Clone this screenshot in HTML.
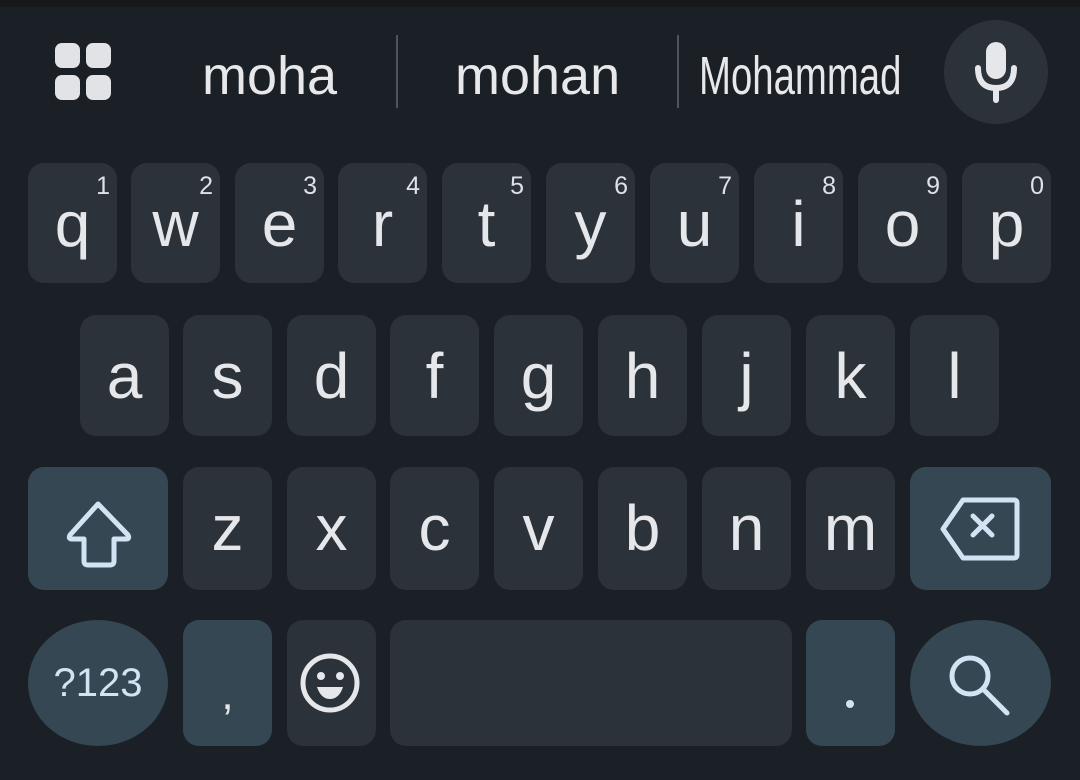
<!DOCTYPE html>
<html><head><meta charset="utf-8"><style>
*{margin:0;padding:0;box-sizing:border-box}
body{width:1080px;height:780px;background:#1b1f26;position:relative;overflow:hidden;font-family:"Liberation Sans",sans-serif;color:#e6e7ea}
.top{position:absolute;left:0;top:0;width:1080px;height:7px;background:#171819}
.k{position:absolute;background:#2c3239;border-radius:16px;text-align:center;font-size:64px;line-height:122px}
.s{background:#344753}
.d{position:absolute;right:7px;top:8px;font-size:25px;line-height:30px;color:#dfe1e4}
.sug{position:absolute;font-size:54px;line-height:1;color:#e8e8ea}
.div{position:absolute;width:2px;height:73px;top:35px;background:#50555b}
.g{position:absolute;width:25px;height:25px;border-radius:7px;background:#e2e3e6}
</style></head><body>
<div class="top"></div>
<div class="g" style="left:55px;top:43px"></div><div class="g" style="left:86px;top:43px"></div>
<div class="g" style="left:55px;top:75px"></div><div class="g" style="left:86px;top:75px"></div>
<div class="sug" style="left:202px;top:49px">moha</div>
<div class="div" style="left:396px"></div>
<div class="sug" style="left:455px;top:49px">mohan</div>
<div class="div" style="left:677px"></div>
<div class="sug" style="left:699px;top:49px;transform:scaleX(0.71);transform-origin:0 0">Mohammad</div>
<div style="position:absolute;left:944px;top:20px;width:104px;height:104px;border-radius:50%;background:#2c3239"></div>
<svg style="position:absolute;left:944px;top:20px" width="104" height="104" viewBox="0 0 104 104">
<rect x="42" y="22" width="20" height="37" rx="10" fill="#e6e7ea"/>
<path d="M34 48 Q34 68 52 68 Q70 68 70 48" fill="none" stroke="#e6e7ea" stroke-width="6" stroke-linecap="round"/>
<line x1="52" y1="68" x2="52" y2="80" stroke="#e6e7ea" stroke-width="6" stroke-linecap="round"/>
</svg>

<div class="k" style="left:28px;top:163px;width:89px;height:120px">q<span class="d">1</span></div>
<div class="k" style="left:131px;top:163px;width:89px;height:120px">w<span class="d">2</span></div>
<div class="k" style="left:235px;top:163px;width:89px;height:120px">e<span class="d">3</span></div>
<div class="k" style="left:338px;top:163px;width:89px;height:120px">r<span class="d">4</span></div>
<div class="k" style="left:442px;top:163px;width:89px;height:120px">t<span class="d">5</span></div>
<div class="k" style="left:546px;top:163px;width:89px;height:120px">y<span class="d">6</span></div>
<div class="k" style="left:650px;top:163px;width:89px;height:120px">u<span class="d">7</span></div>
<div class="k" style="left:754px;top:163px;width:89px;height:120px">i<span class="d">8</span></div>
<div class="k" style="left:858px;top:163px;width:89px;height:120px">o<span class="d">9</span></div>
<div class="k" style="left:962px;top:163px;width:89px;height:120px">p<span class="d">0</span></div>

<div class="k" style="left:80px;top:315px;width:89px;height:121px">a</div>
<div class="k" style="left:183px;top:315px;width:89px;height:121px">s</div>
<div class="k" style="left:287px;top:315px;width:89px;height:121px">d</div>
<div class="k" style="left:390px;top:315px;width:89px;height:121px">f</div>
<div class="k" style="left:494px;top:315px;width:89px;height:121px">g</div>
<div class="k" style="left:598px;top:315px;width:89px;height:121px">h</div>
<div class="k" style="left:702px;top:315px;width:89px;height:121px">j</div>
<div class="k" style="left:806px;top:315px;width:89px;height:121px">k</div>
<div class="k" style="left:910px;top:315px;width:89px;height:121px">l</div>

<div class="k s" style="left:28px;top:467px;width:140px;height:123px">
<svg width="140" height="123" viewBox="0 0 140 123" style="position:absolute;left:0;top:0"><path d="M70 37 L100 68 Q102 72 98 72 L86 72 L86 94 Q86 98 82 98 L60 98 Q56 98 56 94 L56 72 L44 72 Q40 72 42 68 Z" fill="none" stroke="#d3e3f4" stroke-width="5" stroke-linejoin="round"/></svg></div>
<div class="k" style="left:183px;top:467px;width:89px;height:123px">z</div>
<div class="k" style="left:287px;top:467px;width:89px;height:123px">x</div>
<div class="k" style="left:390px;top:467px;width:89px;height:123px">c</div>
<div class="k" style="left:494px;top:467px;width:89px;height:123px">v</div>
<div class="k" style="left:598px;top:467px;width:89px;height:123px">b</div>
<div class="k" style="left:702px;top:467px;width:89px;height:123px">n</div>
<div class="k" style="left:806px;top:467px;width:89px;height:123px">m</div>
<div class="k s" style="left:910px;top:467px;width:141px;height:123px">
<svg width="141" height="123" viewBox="0 0 141 123" style="position:absolute;left:0;top:0"><path d="M53 33 L104 33 Q107 33 107 36 L107 88 Q107 91 104 91 L53 91 L33 62 Z" fill="none" stroke="#d3e3f4" stroke-width="5" stroke-linejoin="round"/><path d="M63 49 L82 68 M82 49 L63 68" stroke="#d3e3f4" stroke-width="5" stroke-linecap="round"/></svg></div>

<div class="k s" style="left:28px;top:620px;width:140px;height:126px;border-radius:50%;font-size:40px;line-height:126px;color:#d3e3f4">?123</div>
<div class="k s" style="left:183px;top:620px;width:89px;height:126px;font-size:44px;line-height:150px">,</div>
<div class="k" style="left:287px;top:620px;width:89px;height:126px">
<svg width="89" height="126" viewBox="0 0 89 126" style="position:absolute;left:0;top:0"><circle cx="43" cy="63" r="27" fill="none" stroke="#e6e7ea" stroke-width="5"/><circle cx="34" cy="56" r="4" fill="#e6e7ea"/><circle cx="53" cy="56" r="4" fill="#e6e7ea"/><path d="M30 67 L56 67 Q52 79 43 79 Q34 79 30 67 Z" fill="#e6e7ea"/></svg></div>
<div class="k" style="left:390px;top:620px;width:402px;height:126px"></div>
<div class="k s" style="left:806px;top:620px;width:89px;height:126px">
<div style="position:absolute;left:40px;top:80px;width:8px;height:8px;border-radius:50%;background:#d3e3f4"></div></div>
<div class="k s" style="left:910px;top:620px;width:141px;height:126px;border-radius:50%">
<svg width="141" height="126" viewBox="0 0 141 126" style="position:absolute;left:0;top:0"><circle cx="60" cy="56" r="18" fill="none" stroke="#d3e3f4" stroke-width="5"/><line x1="73" y1="69" x2="97" y2="93" stroke="#d3e3f4" stroke-width="5" stroke-linecap="round"/></svg></div>
</body></html>
